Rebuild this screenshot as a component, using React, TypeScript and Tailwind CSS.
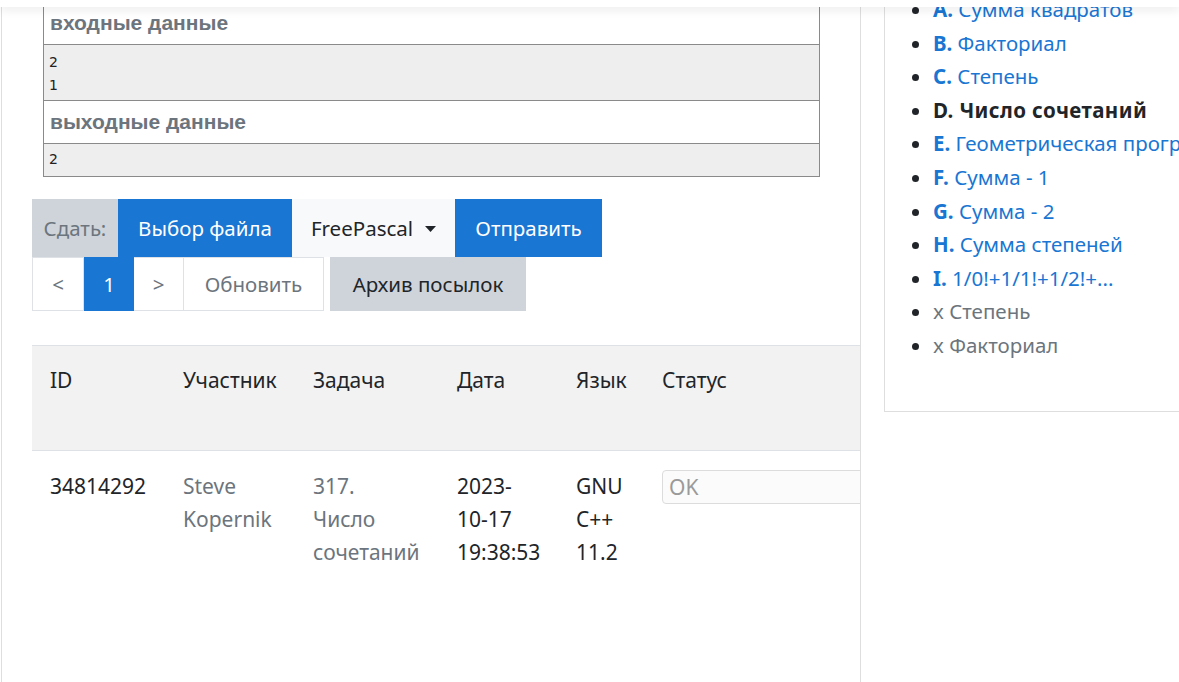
import React from "react";

const problems = [
  { l: "A.", t: "Сумма квадратов" },
  { l: "B.", t: "Факториал" },
  { l: "C.", t: "Степень" },
  { l: "D.", t: "Число сочетаний", current: true },
  { l: "E.", t: "Геометрическая прогрессия" },
  { l: "F.", t: "Сумма - 1" },
  { l: "G.", t: "Сумма - 2" },
  { l: "H.", t: "Сумма степеней" },
  { l: "I.", t: "1/0!+1/1!+1/2!+..." },
];

export default function App() {
  return (
    <div className="relative w-[1179px] h-[682px] overflow-hidden bg-white text-[#212529] font-['Noto_Sans',sans-serif]">
      {/* fixed top navbar, scrolled out of view */}
      <div className="absolute inset-x-0 top-0 z-10 h-[7px] bg-white shadow-[0_3px_10px_rgba(0,0,0,0.09)]" />

      <div className="flex items-start">
        <main className="ml-px h-[682px] w-[860px] shrink-0 overflow-hidden border-x border-[#dedede]">
          {/* sample tests */}
          <div className="ml-[41px] w-[777px] border border-[#8a8a8a] font-['Liberation_Sans',Arial,sans-serif]">
            <div className="h-[44px] border-b border-[#8a8a8a] pl-[6px] pt-[10px] text-[21px] font-bold leading-[24px] text-[#6c757d]">
              входные данные
            </div>
            <div className="h-[56px] border-b border-[#8a8a8a] bg-[#eeeeee] pl-[5px] pt-[6px] font-['DejaVu_Sans',sans-serif] text-[14px] leading-[22.5px] text-[#222]">
              <div>2</div>
              <div>1</div>
            </div>
            <div className="h-[43px] border-b border-[#8a8a8a] pl-[6px] pt-[9px] text-[21px] font-bold leading-[24px] text-[#6c757d]">
              выходные данные
            </div>
            <div className="h-[32px] bg-[#eeeeee] pl-[5px] pt-[4px] font-['DejaVu_Sans',sans-serif] text-[14px] leading-[22.5px] text-[#222]">
              2
            </div>
          </div>

          {/* submit form */}
          <div className="ml-[30px] mt-[22px] flex h-[58px] text-[20.5px]">
            <div className="flex w-[86px] items-center justify-center bg-[#ced4da] text-[#6c757d]">Сдать:</div>
            <button className="flex w-[174px] items-center justify-center bg-[#1976d2] text-white">Выбор файла</button>
            <button className="flex w-[163px] items-center justify-center gap-[12px] bg-[#f8f9fa] text-[#212529]">
              FreePascal
              <svg width="11" height="6" viewBox="0 0 11 6" className="mt-[1px]">
                <path d="M0 0h11L5.5 6z" fill="#212529" />
              </svg>
            </button>
            <button className="flex w-[147px] items-center justify-center bg-[#1976d2] text-white">Отправить</button>
          </div>

          <div className="ml-[30px] flex h-[54px] text-[20.5px]">
            <button className="flex w-[52px] items-center justify-center border border-[#dee2e6] bg-white text-[#6c757d]">&lt;</button>
            <button className="flex w-[50px] items-center justify-center border border-[#1976d2] bg-[#1976d2] text-white">1</button>
            <button className="flex w-[50px] items-center justify-center border border-l-0 border-[#dee2e6] bg-white text-[#6c757d]">&gt;</button>
            <button className="flex w-[140px] items-center justify-center border border-l-0 border-[#dee2e6] bg-white text-[#6c757d]">Обновить</button>
            <button className="ml-[6px] flex w-[196px] items-center justify-center bg-[#ced4da] text-[#212529]">Архив посылок</button>
          </div>

          {/* submissions */}
          <div className="ml-[30px] mt-[34px] w-[950px] text-[21px] leading-[33px]">
            <div className="flex h-[106px] border-y border-[#dee2e6] bg-[#f2f2f2] pt-[18px] text-[#212529]">
              <div className="w-[133px] shrink-0 pl-[18px]">ID</div>
              <div className="w-[130px] shrink-0 pl-[18px]">Участник</div>
              <div className="w-[144px] shrink-0 pl-[18px]">Задача</div>
              <div className="w-[119px] shrink-0 pl-[18px]">Дата</div>
              <div className="w-[86px] shrink-0 pl-[18px]">Язык</div>
              <div className="flex-1 pl-[18px]">Статус</div>
            </div>
            <div className="flex pt-[19px]">
              <div className="w-[133px] shrink-0 pl-[18px] text-[#212529]">34814292</div>
              <div className="w-[130px] shrink-0 pl-[18px] text-[#6c757d]">Steve<br />Kopernik</div>
              <div className="w-[144px] shrink-0 pl-[18px] text-[#6c757d]">317.<br />Число<br />сочетаний</div>
              <div className="w-[119px] shrink-0 pl-[18px] text-[#212529]">2023-<br />10-17<br />19:38:53</div>
              <div className="w-[86px] shrink-0 pl-[18px] text-[#212529]">GNU<br />C++<br />11.2</div>
              <div className="flex-1 pl-[18px]">
                <div className="flex h-[34px] w-[300px] items-center rounded-[4px] border border-[#dcdcdc] bg-[#fbfbfb] pl-[6px] text-[#9a9a9a]">OK</div>
              </div>
            </div>
          </div>
        </main>

        {/* problem list */}
        <aside className="ml-[23px] h-[412px] min-w-0 flex-1 overflow-hidden border-b border-l border-[#dedede]">
          <ul className="-mt-[7px] list-disc whitespace-nowrap pl-[48px] text-[20.5px] leading-[33.6px] text-[#212529]">
            {problems.map((p) =>
              p.current ? (
                <li key={p.l} className="font-bold tracking-[0.4px]">
                  {p.l} {p.t}
                </li>
              ) : (
                <li key={p.l}>
                  <span className="font-bold text-[#1976d2]">{p.l}</span>{" "}
                  <span className="text-[#1976d2]">{p.t}</span>
                </li>
              )
            )}
            <li><span className="text-[#6c757d]">x Степень</span></li>
            <li><span className="text-[#6c757d]">x Факториал</span></li>
          </ul>
        </aside>
      </div>
    </div>
  );
}
